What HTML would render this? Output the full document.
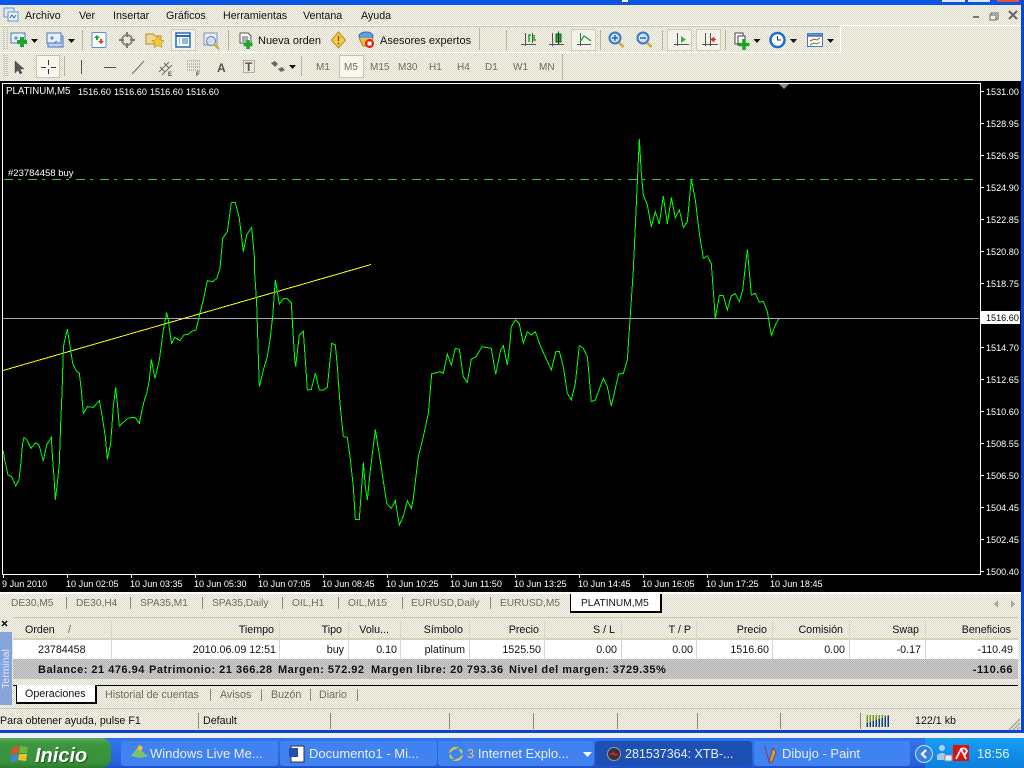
<!DOCTYPE html>
<html><head><meta charset="utf-8"><title>MetaTrader</title>
<style>
html,body{margin:0;padding:0;width:1024px;height:768px;overflow:hidden;background:#ece9d8}
body{position:relative;font-family:"Liberation Sans",sans-serif;font-size:10.7px;color:#111}
.b{position:absolute}
.d{background:repeating-conic-gradient(#f6f5ee 0 25%,#dcd9c6 0 50%) 0 0/2px 2px}
.t{position:absolute;white-space:nowrap;line-height:12px;height:12px;margin-top:1px}
.g{color:#6e6e5e}
.c{font-size:10.2px}
.w{color:#fff;font-size:9.1px}
.tk{color:#e8f0ff;font-size:13px;line-height:16px;height:16px}
.s{position:absolute;width:1px;background:#8f8b6e}
.h{background:#d8d6c6}
.btn{position:absolute;top:741px;height:25px;border-radius:3px;background:#3f82f0}
b{font-weight:700;font-size:11px;letter-spacing:.5px}
</style></head><body>
<div class="b d" style="left:0;top:0;width:1024px;height:768px"></div>
<div class="b" style="left:0;top:0;width:1024px;height:5px;background:#0a55e4"></div>
<div class="b" style="left:942px;top:0;width:23px;height:2px;background:#dfe8fa"></div>
<div class="b" style="left:968px;top:0;width:22px;height:2px;background:#dfe8fa"></div>
<div class="b" style="left:997px;top:0;width:22px;height:2px;background:#e0533a"></div>
<div class="b" style="left:622px;top:0;width:6px;height:2px;background:#fff"></div>
<div class="b" style="left:1021px;top:0;width:3px;height:733px;background:#0a45d0"></div>
<div class="b" style="left:0;top:25px;width:1021px;height:1px;background:#fff"></div>
<div class="b" style="left:0;top:26px;width:840px;height:1px;background:#c8c5b0"></div>
<div class="b" style="left:0;top:52px;width:840px;height:1px;background:#fff"></div>
<div class="b" style="left:840px;top:27px;width:1px;height:26px;background:#fff"></div>

<span class="t" style="left:25px;top:9px">Archivo</span>
<span class="t" style="left:79px;top:9px">Ver</span>
<span class="t" style="left:113px;top:9px">Insertar</span>
<span class="t" style="left:166px;top:9px">Gráficos</span>
<span class="t" style="left:223px;top:9px">Herramientas</span>
<span class="t" style="left:303px;top:9px">Ventana</span>
<span class="t" style="left:361px;top:9px">Ayuda</span>
<span class="t" style="left:258px;top:34px;font-size:11px">Nueva orden</span>
<span class="t" style="left:380px;top:34px;font-size:11px">Asesores expertos</span>

<div class="b" style="left:171px;top:29px;width:25px;height:22px;background:#f3f2ea;box-sizing:border-box;border:1px solid #d0cdb8"></div>
<div class="b" style="left:571px;top:29px;width:25px;height:22px;background:#f3f2ea;box-sizing:border-box;border:1px solid #d0cdb8"></div>
<div class="b" style="left:667px;top:29px;width:25px;height:22px;background:#f3f2ea;box-sizing:border-box;border:1px solid #d0cdb8"></div>
<div class="b" style="left:696px;top:29px;width:25px;height:22px;background:#f3f2ea;box-sizing:border-box;border:1px solid #d0cdb8"></div>
<div class="b" style="left:36px;top:55px;width:24px;height:23px;background:#f7f6f0;box-sizing:border-box;border:1px solid #c8c5b0"></div>
<div class="b" style="left:339px;top:55px;width:25px;height:23px;background:#f7f6f0;box-sizing:border-box;border:1px solid #c8c5b0"></div>

<span class="t g" style="left:316px;top:61px;font-size:10px">M1</span>
<span class="t g" style="left:344px;top:61px;font-size:10px">M5</span>
<span class="t g" style="left:370px;top:61px;font-size:10px">M15</span>
<span class="t g" style="left:398px;top:61px;font-size:10px">M30</span>
<span class="t g" style="left:429px;top:61px;font-size:10px">H1</span>
<span class="t g" style="left:457px;top:61px;font-size:10px">H4</span>
<span class="t g" style="left:485px;top:61px;font-size:10px">D1</span>
<span class="t g" style="left:513px;top:61px;font-size:10px">W1</span>
<span class="t g" style="left:539px;top:61px;font-size:10px">MN</span>

<!-- chart -->
<div class="b" style="left:0;top:81px;width:1021px;height:513px;background:#000"></div>
<div class="b" style="left:0;top:592px;width:1021px;height:2px;background:#fff"></div>
<svg class="b" style="left:0;top:0" width="1024" height="768" viewBox="0 0 1024 768" fill="none">
<g shape-rendering="crispEdges">
<path d="M2.5 83.5H980.5V574.5H2.5Z" stroke="#fff"/>
<path d="M3 318.5H979" stroke="#a4a4b4"/>
<path d="M4 179.5H973" stroke="#32cd32" stroke-dasharray="9 5 3 7"/>
<path d="M3 370.5L371 264.5" stroke="#ff0" />
<g stroke="#0f0" stroke-width="3">
<polyline transform="translate(0,350) scale(.33333)" points="10,303 14,330 20,355 24,375 35,380 47,408 57,390 62,345 68,280 72,263 80,268 93,295 107,278 117,285 130,333 140,285 154,262 158,330 162,380 166,450 172,400 178,340 182,220 186,130 190,0"/>
<polyline transform="translate(0,160) scale(.33333)" points="190,570 190,560 202,508 212,570"/>
<polyline transform="translate(0,350) scale(.33333)" points="212,0 218,40 228,62 238,70 244,120 250,190 262,170 280,172 298,152 306,195 316,260 322,328 332,280 340,170 347,112 352,160 358,228 378,210 385,204 405,202 418,220 426,180 432,155 440,130 448,90 454,28 465,85 478,30 482,0"/>
<polyline transform="translate(0,160) scale(.33333)" points="482,570 490,510 500,458 505,480 510,520 515,550 525,532 540,542 552,525 565,523 575,514 588,510 600,460 610,420 622,362 638,365 650,355 660,325 668,235 682,215 694,127 706,127 718,175 730,275 740,225 755,202 764,300"/>
<polyline transform="translate(250,260) scale(.33333)" points="14,0 14,40 20,130 24,260 28,380 40,330 52,290 60,240 68,170 76,60 82,95 88,132 100,116 112,116 124,128 128,200 134,295 137,320 148,225 160,214 166,300 172,390 184,388 196,340 208,390 220,390 232,382 245,250 256,255 262,320 270,430 280,530 292,532 300,590 310,680 316,778 328,778 340,608 346,680 352,720 360,640 376,508 392,610 410,730 424,745 436,722 448,795 460,768 472,722 484,745 490,715 505,590 520,530 535,460 545,342 570,335 580,340 592,283 604,315 616,265 628,268 640,350 652,367 664,298 678,290 696,260 724,265 737,343 752,270 760,257 772,315 780,248"/>
<polyline transform="translate(500,130) scale(.33333)" points="30,638 34,590 46,570 58,582 70,640 82,605 94,615 106,605 122,650 154,720 168,664 178,664 190,710 202,790 214,810 226,760 238,647 250,655 262,680 274,815 286,810 310,745 322,770 334,828 356,732 370,730 382,690 390,570 400,420 410,200 418,27 424,130 430,195 442,225 454,290 466,245 478,282 490,198 502,282 514,203 526,263 538,240 550,292 562,275 574,148 586,210 598,310 610,385 622,377 634,402 646,565 658,497 670,497 682,540 694,497 706,491 718,515 728,480 742,358 754,495 766,490 778,517 790,514 802,545 814,616 826,585 836,567"/>
</g>
<!-- axis ticks -->
<path stroke="#fff" d="M981 91.500h3M981 123.500h3M981 155.500h3M981 187.500h3M981 219.500h3M981 251.500h3M981 283.500h3M981 347.500h3M981 379.500h3M981 411.500h3M981 443.500h3M981 475.500h3M981 507.500h3M981 539.500h3M981 571.500h3
M3.500 575v3M67.500 575v3M131.500 575v3M195.500 575v3M259.500 575v3M323.500 575v3M387.500 575v3M451.500 575v3M515.500 575v3M579.500 575v3M643.500 575v3M707.500 575v3M771.500 575v3"/>
<!-- vertical separators -->
<path stroke="#b8b49c" d="M82.500 30v20M228.500 30v20M479.500 28v22M600.500 30v20M662.500 30v20M725.500 30v20M506.500 30v20M64.500 56v20M301.500 56v20M562.500 54v26"/>
<path stroke="#a8a48c" d="M4 28v22M4 55v22M7 28v22M7 55v22" stroke-dasharray="1 1"/>
</g>
<path d="M779 84h10l-5 5z" fill="#8a8a8a"/>

<!-- app icon -->
<rect x="4" y="8" width="10" height="9" fill="#dfeaf8" stroke="#6a98d0"/><rect x="8" y="12" width="10" height="9" fill="#eef4fc" stroke="#6a98d0"/><path d="M10 18l2-3 2 3 2-3" stroke="#3a68a8"/>
<!-- new chart -->
<rect x="11" y="33" width="14" height="10" fill="#e8f0fc" stroke="#4a78b8"/><path d="M14 38h4M16 36v4" stroke="#4a78b8"/><path d="M22 37v10M17 42h10" stroke="#1ba52a" stroke-width="4"/>
<path d="M31 39h7l-3.500 4z" fill="#111"/>
<!-- profiles -->
<rect x="48" y="36" width="15" height="11" fill="#bcd3f0" stroke="#4a78b8"/><rect x="47" y="33" width="14" height="10" fill="#e8f0fc" stroke="#4a78b8"/><path d="M50 38h4M52 36v4M54 43l3-2" stroke="#4a78b8"/>
<path d="M68 39h7l-3.500 4z" fill="#111"/>
<!-- market watch -->
<rect x="92" y="32.500" width="14" height="15" rx="1" fill="#fff" stroke="#5a8fd0"/><path d="M97 35l3 3h-2v2h-2v-2h-2z" fill="#1ba52a"/><path d="M101 44l-3-3h2v-2h2v2h2z" fill="#d8421e"/>
<!-- navigator -->
<circle cx="127" cy="40" r="5" stroke="#8a8a80" stroke-width="2"/><path d="M127 32v5M127 43v5M119 40h5M130 40h5" stroke="#7a7a70" stroke-width="2"/>
<!-- favourites -->
<path d="M146 34h7l2 2h6v8h-15z" fill="#f2d888" stroke="#b09030"/><path d="M158 36l2 4 4 .5-3 3 1 4-4-2-4 2 1-4-3-3 4-.500z" fill="#f6d030" stroke="#b09030" stroke-width=".6"/>
<!-- terminal -->
<rect x="176" y="33" width="14" height="14" fill="#fff" stroke="#2a68b8" stroke-width="1.500"/><path d="M176 36h14" stroke="#2a68b8" stroke-width="2"/><path d="M179 39h1M179 41h1M179 43h1M182 39h6M182 41h6M182 43h6" stroke="#3070c0"/>
<!-- tester -->
<rect x="204" y="33" width="13" height="12" fill="#e8eef6" stroke="#8090a8"/><circle cx="211" cy="41" r="4.500" fill="#cfe0f4" stroke="#6080a8"/><path d="M214 44l5 5" stroke="#d8a820" stroke-width="2"/>
<!-- new order -->
<path d="M240 33h8l3 3v7h-11z" fill="#fff" stroke="#555"/><path d="M242 37h6M242 39h6M242 41h4" stroke="#555"/><path d="M248 40v9M243.500 44.500h9" stroke="#1ba52a" stroke-width="3.500"/>
<!-- warning -->
<path d="M338.500 32l7 8-7 8-7-8z" fill="#f4cc40" stroke="#b89020"/><path d="M338.500 36v5M338.500 42.500v2" stroke="#8a5a10" stroke-width="1.500"/>
<!-- experts -->
<ellipse cx="366" cy="36" rx="7" ry="4" fill="#5ca0dc" stroke="#3070b0"/><path d="M359 38l4 8h6l4-8" fill="#f0c040" stroke="#b08020"/><circle cx="369.500" cy="43.500" r="4.500" fill="#d82010"/><rect x="367.500" y="41.500" width="4" height="4" fill="#fff"/>
<!-- bar chart / candle / line -->
<path d="M525.500 33v13M521 44.500h15M532.500 33v10" stroke="#555"/><path d="M531 35h-2v7M534 35v5h2" stroke="#1ba52a" stroke-width="1.500"/>
<path d="M552.500 33v13M549 44.500h15" stroke="#555"/><rect x="556" y="34" width="5" height="8" fill="#1ba52a" stroke="#116820"/><path d="M558.500 31.500v13" stroke="#333"/>
<path d="M580.500 33v13M577 44.500h14" stroke="#555"/><path d="M580 42l4-6 3 2 4 3" stroke="#1ba52a" stroke-width="1.300"/>
<!-- zoom in/out -->
<circle cx="615" cy="38" r="5.500" fill="#cfe4fa" stroke="#3a78c8" stroke-width="2"/><path d="M612 38h6M615 35v6" stroke="#2860b0" stroke-width="1.400"/><path d="M619.500 43l4 4" stroke="#d8a820" stroke-width="2.500"/>
<circle cx="643" cy="38" r="5.500" fill="#cfe4fa" stroke="#3a78c8" stroke-width="2"/><path d="M640 38h6" stroke="#2860b0" stroke-width="1.400"/><path d="M647.500 43l4 4" stroke="#d8a820" stroke-width="2.500"/>
<!-- autoscroll / shift -->
<path d="M677.500 33v13M674 44.500h15" stroke="#555"/><path d="M681 36v7l5-3.500z" fill="#35b545"/>
<path d="M705.500 33v13M702 44.500h16" stroke="#555"/><path d="M710.500 33v13" stroke="#555"/><path d="M716 39.500h-4M711 39.500l3-2v4z" fill="#c83020" stroke="#c83020"/>
<!-- indicators -->
<rect x="735" y="33" width="8" height="11" fill="#fff" stroke="#444"/><rect x="738" y="36" width="7" height="9" fill="#fff" stroke="#444"/><path d="M744 39v11M738.500 44.500h11" stroke="#1ba52a" stroke-width="3.500"/>
<path d="M753.500 39h7l-3.500 4z" fill="#111"/>
<!-- clock -->
<circle cx="777.500" cy="40" r="7" fill="#fff" stroke="#1a70c8" stroke-width="2.500"/><path d="M777.500 36v4h3.500" stroke="#333"/>
<path d="M790 39h7l-3.500 4z" fill="#111"/>
<!-- template -->
<rect x="807.500" y="33.500" width="15" height="13" fill="#fff" stroke="#4a78b8"/><path d="M808 35.500h14" stroke="#3a78c8" stroke-width="2.500"/><path d="M810 41l4-2 3 1 3-2" stroke="#c04020"/><path d="M810 45l4-2 3 1 3-2" stroke="#2aa030"/>
<path d="M827 39h7l-3.500 4z" fill="#111"/>
<!-- toolbar 2 -->
<path d="M15 61l0 12 3-3 2 4 2-1-2-4 4 0z" fill="#555" stroke="#444" stroke-width=".5"/>
<path d="M48.500 60v5M48.500 69v5M41 67.500h5M51 67.500h5" stroke="#333"/>
<path d="M81.500 60v14" stroke="#555" shape-rendering="crispEdges"/>
<path d="M104 67.500h12" stroke="#555" shape-rendering="crispEdges"/>
<path d="M132 74l12-13" stroke="#777" stroke-width="1.200"/>
<path d="M159 72l10-10M162 75l10-10M160 67l5 5M164 63l5 5" stroke="#666" stroke-width=".9"/>
<text x="168" y="76" font-family="Liberation Sans" font-size="6" fill="#444" font-weight="700">E</text>
<path d="M187 61h13M187 64h13M187 67h13M187 70h13" stroke="#888" stroke-dasharray="1 1"/>
<text x="196" y="76" font-family="Liberation Sans" font-size="6" fill="#444" font-weight="700">F</text>
<text x="217" y="72" font-family="Liberation Sans" font-size="12" fill="#555" font-weight="700">A</text>
<rect x="243.500" y="60.500" width="11" height="12" stroke="#777" stroke-dasharray="1 1"/>
<text x="245" y="71" font-family="Liberation Sans" font-size="12" fill="#555" font-weight="700">T</text>
<path d="M271 63l4-2 3 3-3 3zM278 69l4-2 3 3-4 2z" fill="#666"/>
<path d="M289 65h7l-3.500 4z" fill="#111"/>
<!-- win buttons -->
<path d="M973 17h6" stroke="#777" stroke-width="2"/>
<rect x="991" y="13" width="7" height="6" stroke="#666"/><rect x="990" y="15" width="6" height="5" fill="#eee" stroke="#666"/>
<path d="M1009 11l8 8M1017 11l-8 8" stroke="#666" stroke-width="2"/>
<!-- scroll arrows -->
<path d="M998 600v8l-4-4zM1011 600v8l4-4z" fill="#a8a898"/>
<!-- terminal close -->
<path d="M2 621l5 5M7 621l-5 5" stroke="#111" stroke-width="1.500"/>
<!-- row icon -->
<path d="M18 643h8l3 3v11h-11z" fill="#fff" stroke="#667"/><circle cx="27.500" cy="653.500" r="3" fill="#2a80d0"/>
<!-- red arrow icon -->
<rect x="17" y="662" width="12" height="13" fill="#fff" stroke="#777"/><path d="M23 664v5M20 668h6l-3 4z" fill="#c83010" stroke="#c83010"/>
<!-- bars -->
<g shape-rendering="crispEdges" stroke-width="1.500">
<path d="M867 715v12M870 715v12M873 715v12M876 715v12M879 715v12M882 715v12M885 715v12M888 715v12" stroke="#7a9a20"/>
<path d="M867 723v4M870 722v5M873 721v6M876 720v7M879 719v8M882 718v9M885 717v10M888 716v11" stroke="#0c4080"/>
</g>
<!-- grip -->
<path d="M1009 730l11-11M1013 730l7-7M1017 730l3-3" stroke="#a8a498" stroke-width="1.500"/>
</svg>

<span class="t w" style="left:6px;top:85px;font-size:9.7px">PLATINUM,M5</span>
<span class="t w" style="left:78px;top:85px">1516.60</span>
<span class="t w" style="left:114px;top:85px">1516.60</span>
<span class="t w" style="left:150px;top:85px">1516.60</span>
<span class="t w" style="left:186px;top:85px">1516.60</span>
<span class="t w" style="left:8px;top:167px;font-size:9.5px">#23784458 buy</span>
<span class="t w" style="left:986px;top:85px">1531.00</span>
<span class="t w" style="left:986px;top:117px">1528.95</span>
<span class="t w" style="left:986px;top:149px">1526.95</span>
<span class="t w" style="left:986px;top:181px">1524.90</span>
<span class="t w" style="left:986px;top:213px">1522.85</span>
<span class="t w" style="left:986px;top:245px">1520.80</span>
<span class="t w" style="left:986px;top:277px">1518.75</span>
<div class="b" style="left:981px;top:311px;width:39px;height:13px;background:#fff"></div>
<span class="t" style="left:986px;top:311px;font-size:9.1px;color:#000">1516.60</span>
<span class="t w" style="left:986px;top:341px">1514.70</span>
<span class="t w" style="left:986px;top:373px">1512.65</span>
<span class="t w" style="left:986px;top:405px">1510.60</span>
<span class="t w" style="left:986px;top:437px">1508.55</span>
<span class="t w" style="left:986px;top:469px">1506.50</span>
<span class="t w" style="left:986px;top:501px">1504.45</span>
<span class="t w" style="left:986px;top:533px">1502.45</span>
<span class="t w" style="left:986px;top:565px">1500.40</span>

<span class="t w" style="left:2px;top:577px">9 Jun 2010</span>
<span class="t w" style="left:66px;top:577px">10 Jun 02:05</span>
<span class="t w" style="left:130px;top:577px">10 Jun 03:35</span>
<span class="t w" style="left:194px;top:577px">10 Jun 05:30</span>
<span class="t w" style="left:258px;top:577px">10 Jun 07:05</span>
<span class="t w" style="left:322px;top:577px">10 Jun 08:45</span>
<span class="t w" style="left:386px;top:577px">10 Jun 10:25</span>
<span class="t w" style="left:450px;top:577px">10 Jun 11:50</span>
<span class="t w" style="left:514px;top:577px">10 Jun 13:25</span>
<span class="t w" style="left:578px;top:577px">10 Jun 14:45</span>
<span class="t w" style="left:642px;top:577px">10 Jun 16:05</span>
<span class="t w" style="left:706px;top:577px">10 Jun 17:25</span>
<span class="t w" style="left:770px;top:577px">10 Jun 18:45</span>

<!-- chart tabs -->
<span class="t g c" style="left:11px;top:597px">DE30,M5</span><div class="s" style="left:66px;top:597px;height:12px"></div>
<span class="t g c" style="left:76px;top:597px">DE30,H4</span><div class="s" style="left:130px;top:597px;height:12px"></div>
<span class="t g c" style="left:140px;top:597px">SPA35,M1</span><div class="s" style="left:202px;top:597px;height:12px"></div>
<span class="t g c" style="left:212px;top:597px">SPA35,Daily</span><div class="s" style="left:282px;top:597px;height:12px"></div>
<span class="t g c" style="left:292px;top:597px">OIL,H1</span><div class="s" style="left:338px;top:597px;height:12px"></div>
<span class="t g c" style="left:348px;top:597px">OIL,M15</span><div class="s" style="left:402px;top:597px;height:12px"></div>
<span class="t g c" style="left:411px;top:597px">EURUSD,Daily</span><div class="s" style="left:490px;top:597px;height:12px"></div>
<span class="t g c" style="left:500px;top:597px">EURUSD,M5</span>
<div class="b" style="left:570px;top:594px;width:92px;height:19px;background:#fff;box-sizing:border-box;border:1px solid #000;border-top:0;border-right-width:2px;border-bottom-width:2px"></div>
<span class="t c" style="left:581px;top:597px">PLATINUM,M5</span>

<!-- terminal -->
<div class="b" style="left:0;top:632px;width:12px;height:73px;background:#86a4dc"></div>
<div class="b" style="left:13px;top:617px;width:1005px;height:1px;background:#c8c5a8"></div>
<span class="t" style="left:-31px;top:662px;width:74px;transform:rotate(-90deg);color:#dfe8f8;font-size:10.500px;text-align:center">Terminal</span>
<div class="b" style="left:13px;top:640px;width:1005px;height:19px;background:#fff"></div>
<div class="b" style="left:13px;top:659px;width:1005px;height:20px;background:repeating-conic-gradient(#d0d0d0 0 25%,#b0b0b0 0 50%) 0 0/2px 2px"></div>
<div class="b" style="left:13px;top:685px;width:1005px;height:1px;background:#000"></div>
<div class="b" style="left:13px;top:638px;width:1005px;height:2px;background:#d4d2b8"></div>

<div class="s h" style="left:111px;top:620px;height:39px"></div>
<div class="s h" style="left:279px;top:620px;height:39px"></div>
<div class="s h" style="left:348px;top:620px;height:39px"></div>
<div class="s h" style="left:400px;top:620px;height:39px"></div>
<div class="s h" style="left:469px;top:620px;height:39px"></div>
<div class="s h" style="left:544px;top:620px;height:39px"></div>
<div class="s h" style="left:621px;top:620px;height:39px"></div>
<div class="s h" style="left:696px;top:620px;height:39px"></div>
<div class="s h" style="left:772px;top:620px;height:39px"></div>
<div class="s h" style="left:849px;top:620px;height:39px"></div>
<div class="s h" style="left:925px;top:620px;height:39px"></div>

<span class="t" style="left:25px;top:623px">Orden</span><span class="t g" style="left:68px;top:623px">/</span>
<span class="t" style="right:750px;top:623px">Tiempo</span>
<span class="t" style="right:682px;top:623px">Tipo</span>
<span class="t" style="right:635px;top:623px">Volu...</span>
<span class="t" style="right:561px;top:623px">Símbolo</span>
<span class="t" style="right:485px;top:623px">Precio</span>
<span class="t" style="right:409px;top:623px">S / L</span>
<span class="t" style="right:333px;top:623px">T / P</span>
<span class="t" style="right:257px;top:623px">Precio</span>
<span class="t" style="right:181px;top:623px">Comisión</span>
<span class="t" style="right:105px;top:623px">Swap</span>
<span class="t" style="right:13px;top:623px">Beneficios</span>

<span class="t" style="left:38px;top:643px">23784458</span>
<span class="t" style="right:748px;top:643px">2010.06.09 12:51</span>
<span class="t" style="right:680px;top:643px">buy</span>
<span class="t" style="right:627px;top:643px">0.10</span>
<span class="t" style="right:559px;top:643px">platinum</span>
<span class="t" style="right:483px;top:643px">1525.50</span>
<span class="t" style="right:407px;top:643px">0.00</span>
<span class="t" style="right:331px;top:643px">0.00</span>
<span class="t" style="right:255px;top:643px">1516.60</span>
<span class="t" style="right:179px;top:643px">0.00</span>
<span class="t" style="right:103px;top:643px">-0.17</span>
<span class="t" style="right:11px;top:643px">-110.49</span>

<b class="t" style="left:38px;top:663px">Balance: 21 476.94</b>
<b class="t" style="left:149px;top:663px">Patrimonio: 21 366.28</b>
<b class="t" style="left:278px;top:663px">Margen: 572.92</b>
<b class="t" style="left:371px;top:663px">Margen libre: 20 793.36</b>
<b class="t" style="left:509px;top:663px">Nivel del margen: 3729.35%</b>
<b class="t" style="right:11px;top:663px">-110.66</b>

<div class="b" style="left:16px;top:685px;width:81px;height:19px;background:#fff;box-sizing:border-box;border:1px solid #000;border-top:0;border-right-width:2px;border-bottom-width:2px"></div>
<span class="t" style="left:25px;top:687px">Operaciones</span>
<span class="t g" style="left:105px;top:688px">Historial de cuentas</span><div class="s" style="left:210px;top:689px;height:12px"></div>
<span class="t g" style="left:220px;top:688px">Avisos</span><div class="s" style="left:261px;top:689px;height:12px"></div>
<span class="t g" style="left:271px;top:688px">Buzón</span><div class="s" style="left:310px;top:689px;height:12px"></div>
<span class="t g" style="left:319px;top:688px">Diario</span><div class="s" style="left:357px;top:689px;height:12px"></div>

<!-- status -->
<div class="b" style="left:0;top:708px;width:1021px;height:1px;background:#c8c5b0"></div>
<div class="s" style="left:198px;top:713px;height:16px"></div>
<div class="s" style="left:330px;top:713px;height:16px"></div>
<div class="s" style="left:449px;top:713px;height:16px"></div>
<div class="s" style="left:533px;top:713px;height:16px"></div>
<div class="s" style="left:617px;top:713px;height:16px"></div>
<div class="s" style="left:697px;top:713px;height:16px"></div>
<div class="s" style="left:780px;top:713px;height:16px"></div>
<div class="s" style="left:860px;top:713px;height:16px"></div>
<span class="t" style="left:0;top:714px">Para obtener ayuda, pulse F1</span>
<span class="t" style="left:203px;top:714px">Default</span>
<span class="t" style="left:915px;top:714px">122/1 kb</span>

<!-- bottom bands -->
<div class="b" style="left:0;top:730px;width:1024px;height:3px;background:#0a45d0"></div>
<div class="b" style="left:0;top:733px;width:1024px;height:5px;background:#eef0f6"></div>
<div class="b" style="left:0;top:738px;width:1024px;height:30px;background:linear-gradient(#2a6fe8,#2f74ec 10%,#2560dc 90%,#1c4cc0)"></div>
<div class="b" style="left:925px;top:738px;width:99px;height:30px;background:linear-gradient(#16a0f0,#1090ea 50%,#0c80dc)"></div>

<div class="b" style="left:0;top:738px;width:111px;height:30px;border-radius:0 10px 10px 0;background:linear-gradient(#5ca85c,#3d963d 20%,#37923a 80%,#2a7a2c)"></div>
<svg class="b" style="left:10px;top:745px" width="20" height="18" viewBox="0 0 20 18"><path d="M2 3l7-2-1 7-7 1z" fill="#e0502a"/><path d="M10 1l8 1-1 6-8 0z" fill="#6cb83c"/><path d="M1 10l7-1-1 7-7 1z" fill="#4a80d8"/><path d="M9 9l8 0-1 7-8-1z" fill="#f0c030"/></svg>
<i class="t" style="left:35px;top:744px;height:22px;line-height:22px;color:#fff;font-size:20px;font-weight:700;text-shadow:1px 1px 1px #204820">Inicio</i>

<div class="btn" style="left:121px;width:157px"></div>
<div class="btn" style="left:280px;width:157px"></div>
<div class="btn" style="left:438px;width:156px"></div>
<div class="btn" style="left:595px;width:157px;background:#1e50b4"></div>
<div class="btn" style="left:754px;width:156px"></div>
<svg class="b" style="left:0;top:738px" width="1024" height="30" viewBox="0 738 1024 30" fill="none">
<path d="M131 756l6-8 4 2 4 4 4 2-9 2z" fill="#7cc06c"/><circle cx="140" cy="748" r="2.500" fill="#f0c040"/>
<rect x="291" y="746" width="13" height="16" fill="#fff" stroke="#333"/><rect x="289" y="748" width="9" height="9" fill="#2050b0"/>
<circle cx="456" cy="754" r="6" stroke="#f0c040" stroke-width="2"/><ellipse cx="456" cy="754" rx="9" ry="4" stroke="#2a90e0" stroke-width="1.500" transform="rotate(-30 456 754)"/>
<path d="M583 752h9l-4.500 5z" fill="#fff"/>
<circle cx="614" cy="754" r="6.500" fill="#333" stroke="#99a"/><path d="M609 755l4-3 3 2 3-1-3 3-3-1z" fill="#e02020"/>
<path d="M765 746l4 16 4-14 3 4-4 10h-3z" fill="#d8a030" stroke="#903020" stroke-width=".7"/>
<circle cx="924" cy="754" r="8.500" fill="#3a80e0" stroke="#c8e0f8"/><path d="M926 750l-4 4 4 4" stroke="#fff" stroke-width="2.200"/>
<circle cx="942" cy="748" r="3" fill="#b0d0f0"/><path d="M937 760v-5q5-4 9 0v5z" fill="#a8c8e8"/><rect x="945" y="755" width="7" height="6" fill="#e8f0f8" stroke="#88a"/>
<rect x="953" y="745" width="16" height="16" fill="#e01010"/><path d="M956 759l5-10q4-2 6 2l-3 5M961 749l5 10" stroke="#fff" stroke-width="1.800"/>
</svg>
<span class="t tk" style="left:150px;top:745px">Windows Live Me...</span>
<span class="t tk" style="left:309px;top:745px">Documento1 - Mi...</span>
<span class="t tk" style="left:467px;top:745px"><span style="color:#f4c060">3</span> Internet Explo...</span>
<span class="t tk" style="left:625px;top:745px;font-size:12.500px">281537364: XTB-...</span>
<span class="t tk" style="left:782px;top:745px">Dibujo - Paint</span>
<span class="t tk" style="left:977px;top:745px;font-size:13px">18:56</span>
</body></html>
